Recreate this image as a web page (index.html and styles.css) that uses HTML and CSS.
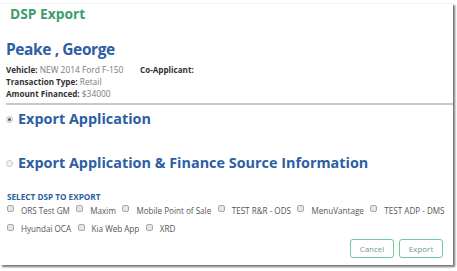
FILE: index.html
```
<!DOCTYPE html>
<html>
<head>
<meta charset="utf-8">
<link rel="stylesheet" href="styles.css">
</head>
<body>
<div class="dialog">
  <div class="title">DSP Export</div>
  <div class="info">
    <div class="name">Peake , George</div>
    <div class="row">
      <span class="cell vehicle"><b>Vehicle:</b> NEW 2014 Ford F-150</span>
      <span class="cell"><b>Co-Applicant:</b></span>
    </div>
    <div class="row"><span class="cell"><b>Transaction Type:</b> Retail</span></div>
    <div class="row"><span class="cell"><b>Amount Financed:</b> $34000</span></div>
  </div>
  <div class="sep"></div>
  <div class="option first"><span class="radio checked"></span><span class="opt-label">Export Application</span></div>
  <div class="option second"><span class="radio"></span><span class="opt-label">Export Application &amp; Finance Source Information</span></div>
  <div class="dsp">
    <div class="dsp-head">SELECT DSP TO EXPORT</div>
    <div class="checks">
      <span class="chk"><span class="box"></span>ORS Test GM</span>
      <span class="chk"><span class="box"></span>Maxim</span>
      <span class="chk"><span class="box"></span>Mobile Point of Sale</span>
      <span class="chk"><span class="box"></span>TEST R&amp;R - ODS</span>
      <span class="chk"><span class="box"></span>MenuVantage</span>
      <span class="chk"><span class="box"></span>TEST ADP - DMS</span>
    </div>
    <div class="checks second-row">
      <span class="chk"><span class="box"></span>Hyundai OCA</span>
      <span class="chk"><span class="box"></span>Kia Web App</span>
      <span class="chk"><span class="box"></span>XRD</span>
    </div>
  </div>
  <div class="buttons">
    <span class="btn">Cancel</span>
    <span class="btn">Export</span>
  </div>
</div>
</body>
</html>
```

FILE: styles.css
```
html, body { margin: 0; padding: 0; background: #fff; }
body { font-family: "Open Sans", "DejaVu Sans", sans-serif; width: 457px; height: 271px; overflow: hidden; }
.dialog {
  margin-top: 3px;
  width: 453px;
  height: 262px;
  border-top: 1px solid #f2f2f2;
  box-shadow: 2px 2px 2px rgba(0,0,0,0.55);
  box-sizing: border-box;
  display: flex;
  flex-direction: column;
}
.title {
  color: #3d9e6b;
  font-weight: 700;
  font-size: 13.8px;
  line-height: 16px;
  padding: 2px 0 0 10px;
}
.info { padding: 17px 0 0 6px; }
.name {
  color: #2c5ea3;
  font-weight: 700;
  font-size: 15.5px;
  letter-spacing: -0.4px;
  line-height: 20px;
  margin-bottom: 5px;
}
.row { display: flex; font-size: 8.4px; line-height: 12px; color: #7a7a7a; white-space: nowrap; }
.row b { color: #333; font-size: 8.1px; }
.cell.vehicle { width: 134px; }
.sep { height: 2px; background: #c8c8c8; margin: 3px 0 0 6px; }
.option { display: flex; align-items: center; padding-left: 6px; }
.option.first { margin-top: 5px; }
.option.second { margin-top: 26px; }
.radio {
  width: 7px; height: 7px; border-radius: 50%;
  border: 1px solid #c4c4c4; background: #f2f2f2; box-sizing: border-box;
  margin-right: 5px; position: relative;
}
.radio.checked::after {
  content: ""; position: absolute; left: 1px; top: 1px; width: 3px; height: 3px;
  border-radius: 50%; background: #555;
}
.opt-label { color: #2c5ea3; font-weight: 700; font-size: 14.4px; line-height: 18px; white-space: nowrap; }
.dsp { padding: 20px 0 0 7px; }
.dsp-head { color: #2c5ea3; font-weight: 700; font-size: 8.2px; line-height: 10px; }
.checks { display: flex; font-size: 8.1px; color: #555; line-height: 10px; margin-top: 3.5px; white-space: nowrap; }
.checks.second-row { margin-top: 8.5px; }
.chk { display: flex; align-items: flex-start; margin-right: 6.5px; }
.box {
  width: 7px; height: 7px; border: 1px solid #aaa; border-radius: 2px;
  background: #e6e6e6; box-sizing: border-box; margin: -0.5px 7px 0 0;
}
.buttons { display: flex; justify-content: flex-end; gap: 5px; padding: 4.5px 10px 0 0; }
.btn {
  display: flex; align-items: center; justify-content: center;
  width: 44px; height: 19px; box-sizing: border-box;
  border: 1.5px solid #6fcb97; border-radius: 3px;
  color: #6f9f86; font-size: 8px;
}
```
